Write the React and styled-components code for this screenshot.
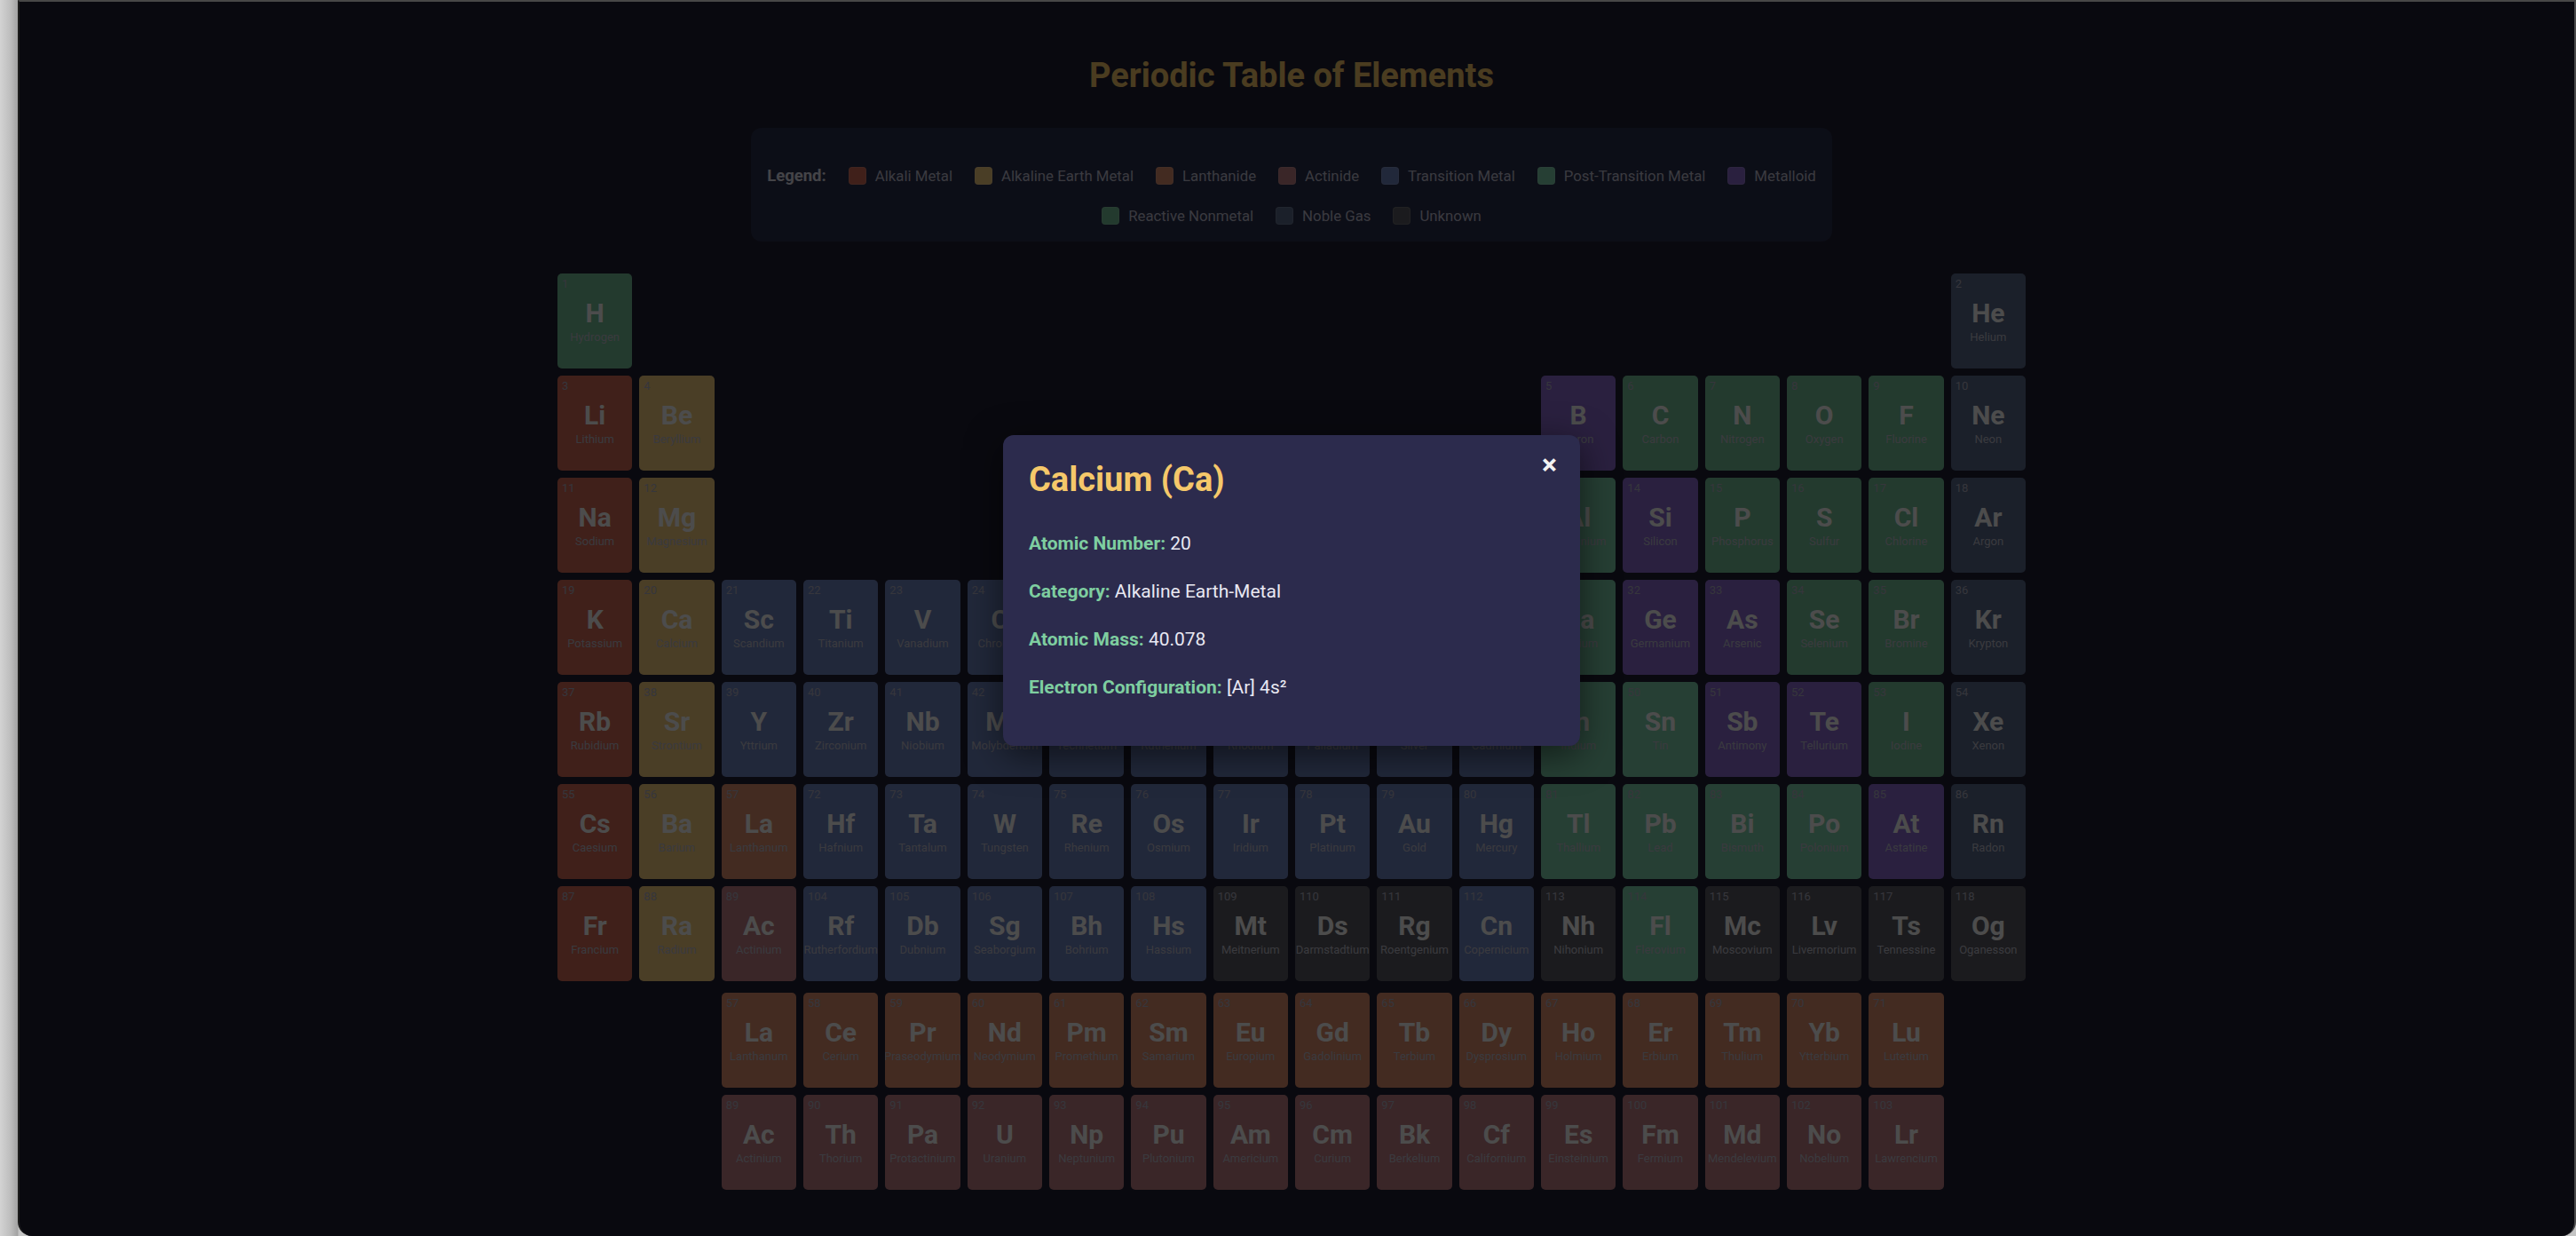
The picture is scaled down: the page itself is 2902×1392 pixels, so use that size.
import React from "react";
import styled, { createGlobalStyle } from "styled-components";

const CATEGORY = {
  alkali: { label: "Alkali Metal", color: "#d56b57" },
  alkaline: { label: "Alkaline Earth Metal", color: "#f7cf7f" },
  lanthanide: { label: "Lanthanide", color: "#df8f6e" },
  actinide: { label: "Actinide", color: "#c17f85" },
  transition: { label: "Transition Metal", color: "#7185c1" },
  post: { label: "Post-Transition Metal", color: "#7fd2ad" },
  metalloid: { label: "Metalloid", color: "#8c6bd2" },
  reactive: { label: "Reactive Nonmetal", color: "#75c199" },
  noble: { label: "Noble Gas", color: "#5a6b8c" },
  unknown: { label: "Unknown", color: "#5d5d64" },
};

const LEGEND_ROWS = [
  ["alkali", "alkaline", "lanthanide", "actinide", "transition", "post", "metalloid"],
  ["reactive", "noble", "unknown"],
];

// [number, symbol, name, category, column]
const PERIODS = [
  [
    [1, "H", "Hydrogen", "reactive", 1],
    [2, "He", "Helium", "noble", 18],
  ],
  [
    [3, "Li", "Lithium", "alkali", 1],
    [4, "Be", "Beryllium", "alkaline", 2],
    [5, "B", "Boron", "metalloid", 13],
    [6, "C", "Carbon", "reactive", 14],
    [7, "N", "Nitrogen", "reactive", 15],
    [8, "O", "Oxygen", "reactive", 16],
    [9, "F", "Fluorine", "reactive", 17],
    [10, "Ne", "Neon", "noble", 18],
  ],
  [
    [11, "Na", "Sodium", "alkali", 1],
    [12, "Mg", "Magnesium", "alkaline", 2],
    [13, "Al", "Aluminium", "post", 13],
    [14, "Si", "Silicon", "metalloid", 14],
    [15, "P", "Phosphorus", "reactive", 15],
    [16, "S", "Sulfur", "reactive", 16],
    [17, "Cl", "Chlorine", "reactive", 17],
    [18, "Ar", "Argon", "noble", 18],
  ],
  [
    [19, "K", "Potassium", "alkali", 1],
    [20, "Ca", "Calcium", "alkaline", 2],
    [21, "Sc", "Scandium", "transition", 3],
    [22, "Ti", "Titanium", "transition", 4],
    [23, "V", "Vanadium", "transition", 5],
    [24, "Cr", "Chromium", "transition", 6],
    [25, "Mn", "Manganese", "transition", 7],
    [26, "Fe", "Iron", "transition", 8],
    [27, "Co", "Cobalt", "transition", 9],
    [28, "Ni", "Nickel", "transition", 10],
    [29, "Cu", "Copper", "transition", 11],
    [30, "Zn", "Zinc", "transition", 12],
    [31, "Ga", "Gallium", "post", 13],
    [32, "Ge", "Germanium", "metalloid", 14],
    [33, "As", "Arsenic", "metalloid", 15],
    [34, "Se", "Selenium", "reactive", 16],
    [35, "Br", "Bromine", "reactive", 17],
    [36, "Kr", "Krypton", "noble", 18],
  ],
  [
    [37, "Rb", "Rubidium", "alkali", 1],
    [38, "Sr", "Strontium", "alkaline", 2],
    [39, "Y", "Yttrium", "transition", 3],
    [40, "Zr", "Zirconium", "transition", 4],
    [41, "Nb", "Niobium", "transition", 5],
    [42, "Mo", "Molybdenum", "transition", 6],
    [43, "Tc", "Technetium", "transition", 7],
    [44, "Ru", "Ruthenium", "transition", 8],
    [45, "Rh", "Rhodium", "transition", 9],
    [46, "Pd", "Palladium", "transition", 10],
    [47, "Ag", "Silver", "transition", 11],
    [48, "Cd", "Cadmium", "transition", 12],
    [49, "In", "Indium", "post", 13],
    [50, "Sn", "Tin", "post", 14],
    [51, "Sb", "Antimony", "metalloid", 15],
    [52, "Te", "Tellurium", "metalloid", 16],
    [53, "I", "Iodine", "reactive", 17],
    [54, "Xe", "Xenon", "noble", 18],
  ],
  [
    [55, "Cs", "Caesium", "alkali", 1],
    [56, "Ba", "Barium", "alkaline", 2],
    [57, "La", "Lanthanum", "lanthanide", 3],
    [72, "Hf", "Hafnium", "transition", 4],
    [73, "Ta", "Tantalum", "transition", 5],
    [74, "W", "Tungsten", "transition", 6],
    [75, "Re", "Rhenium", "transition", 7],
    [76, "Os", "Osmium", "transition", 8],
    [77, "Ir", "Iridium", "transition", 9],
    [78, "Pt", "Platinum", "transition", 10],
    [79, "Au", "Gold", "transition", 11],
    [80, "Hg", "Mercury", "transition", 12],
    [81, "Tl", "Thallium", "post", 13],
    [82, "Pb", "Lead", "post", 14],
    [83, "Bi", "Bismuth", "post", 15],
    [84, "Po", "Polonium", "post", 16],
    [85, "At", "Astatine", "metalloid", 17],
    [86, "Rn", "Radon", "noble", 18],
  ],
  [
    [87, "Fr", "Francium", "alkali", 1],
    [88, "Ra", "Radium", "alkaline", 2],
    [89, "Ac", "Actinium", "actinide", 3],
    [104, "Rf", "Rutherfordium", "transition", 4],
    [105, "Db", "Dubnium", "transition", 5],
    [106, "Sg", "Seaborgium", "transition", 6],
    [107, "Bh", "Bohrium", "transition", 7],
    [108, "Hs", "Hassium", "transition", 8],
    [109, "Mt", "Meitnerium", "unknown", 9],
    [110, "Ds", "Darmstadtium", "unknown", 10],
    [111, "Rg", "Roentgenium", "unknown", 11],
    [112, "Cn", "Copernicium", "transition", 12],
    [113, "Nh", "Nihonium", "unknown", 13],
    [114, "Fl", "Flerovium", "post", 14],
    [115, "Mc", "Moscovium", "unknown", 15],
    [116, "Lv", "Livermorium", "unknown", 16],
    [117, "Ts", "Tennessine", "unknown", 17],
    [118, "Og", "Oganesson", "unknown", 18],
  ],
];

const LANTHANIDES = [
  ["La", "Lanthanum"], ["Ce", "Cerium"], ["Pr", "Praseodymium"], ["Nd", "Neodymium"],
  ["Pm", "Promethium"], ["Sm", "Samarium"], ["Eu", "Europium"], ["Gd", "Gadolinium"],
  ["Tb", "Terbium"], ["Dy", "Dysprosium"], ["Ho", "Holmium"], ["Er", "Erbium"],
  ["Tm", "Thulium"], ["Yb", "Ytterbium"], ["Lu", "Lutetium"],
];

const ACTINIDES = [
  ["Ac", "Actinium"], ["Th", "Thorium"], ["Pa", "Protactinium"], ["U", "Uranium"],
  ["Np", "Neptunium"], ["Pu", "Plutonium"], ["Am", "Americium"], ["Cm", "Curium"],
  ["Bk", "Berkelium"], ["Cf", "Californium"], ["Es", "Einsteinium"], ["Fm", "Fermium"],
  ["Md", "Mendelevium"], ["No", "Nobelium"], ["Lr", "Lawrencium"],
];

const SELECTED = {
  name: "Calcium",
  symbol: "Ca",
  number: 20,
  category: "Alkaline Earth-Metal",
  mass: "40.078",
  config: "[Ar] 4s²",
};

function ElementCell({ number, symbol, name, category, col, row }) {
  return (
    <Cell $color={CATEGORY[category].color} $col={col} $row={row}>
      <CellNumber>{number}</CellNumber>
      <CellSymbol>{symbol}</CellSymbol>
      <CellName>{name}</CellName>
    </Cell>
  );
}

export default function App() {
  return (
    <>
      <GlobalStyle />
      <Window>
        <Page>
          <Title>Periodic Table of Elements</Title>
          <Legend>
            {LEGEND_ROWS.map((keys, i) => (
              <LegendRow key={i}>
                {i === 0 ? <LegendLabel>Legend:</LegendLabel> : null}
                {keys.map((key) => (
                  <LegendItem key={key}>
                    <Swatch $color={CATEGORY[key].color} />
                    {CATEGORY[key].label}
                  </LegendItem>
                ))}
              </LegendRow>
            ))}
          </Legend>
          <TableGrid>
            {PERIODS.map((period, p) =>
              period.map(([number, symbol, name, category, col]) => (
                <ElementCell
                  key={number}
                  number={number}
                  symbol={symbol}
                  name={name}
                  category={category}
                  col={col}
                  row={p + 1}
                />
              ))
            )}
          </TableGrid>
          <FBlockGrid>
            {LANTHANIDES.map(([symbol, name], i) => (
              <ElementCell
                key={symbol}
                number={57 + i}
                symbol={symbol}
                name={name}
                category="lanthanide"
                col={3 + i}
                row={1}
              />
            ))}
            {ACTINIDES.map(([symbol, name], i) => (
              <ElementCell
                key={symbol}
                number={89 + i}
                symbol={symbol}
                name={name}
                category="actinide"
                col={3 + i}
                row={2}
              />
            ))}
          </FBlockGrid>
        </Page>
        <Overlay>
          <Modal>
            <CloseButton>×</CloseButton>
            <ModalTitle>
              {SELECTED.name} ({SELECTED.symbol})
            </ModalTitle>
            <ModalBody>
              <InfoRow>
                <InfoLabel>Atomic Number:</InfoLabel> {SELECTED.number}
              </InfoRow>
              <InfoRow>
                <InfoLabel>Category:</InfoLabel> {SELECTED.category}
              </InfoRow>
              <InfoRow>
                <InfoLabel>Atomic Mass:</InfoLabel> {SELECTED.mass}
              </InfoRow>
              <InfoRow>
                <InfoLabel>Electron Configuration:</InfoLabel> {SELECTED.config}
              </InfoRow>
            </ModalBody>
          </Modal>
        </Overlay>
      </Window>
    </>
  );
}

const GlobalStyle = createGlobalStyle`
  html, body {
    margin: 0;
    padding: 0;
  }
  body {
    background: linear-gradient(90deg, #d3d3d3 0, #bdbdbd 12px, #a2a2a2 20px, #c4c4c4 21px);
    font-family: "Roboto", "Liberation Sans", sans-serif;
    overflow: hidden;
  }
`;

const Window = styled.div`
  position: relative;
  box-sizing: border-box;
  margin-left: 20px;
  height: 1392px;
  background: #212135;
  border-top: 2px solid #474747;
  border-left: 2px solid #1c1c1c;
  border-right: 2px solid #4a4a4a;
  border-radius: 0 0 16px 16px;
  overflow: hidden;
`;

const Page = styled.div`
  padding: 61px 12px 0 0;
`;

const Title = styled.h1`
  margin: 0 0 35px;
  text-align: center;
  font-size: 38px;
  line-height: 1.2;
  font-weight: 700;
  color: #f7c86b;
`;

const Legend = styled.div`
  box-sizing: border-box;
  width: 1218px;
  margin: 0 auto 36px;
  padding: 44px 18px 19px;
  display: flex;
  flex-direction: column;
  gap: 25px;
  background: #2b2f4d;
  border-radius: 12px;
`;

const LegendRow = styled.div`
  display: flex;
  justify-content: center;
  align-items: center;
  gap: 25px;
  height: 20px;
  white-space: nowrap;
`;

const LegendLabel = styled.span`
  font-size: 18.5px;
  font-weight: 700;
  color: #e3e3f0;
`;

const LegendItem = styled.span`
  display: flex;
  align-items: center;
  gap: 10px;
  font-size: 16.8px;
  color: #c1c1d5;
`;

const Swatch = styled.span`
  width: 20px;
  height: 20px;
  box-sizing: border-box;
  border-radius: 4px;
  border: 1px solid rgba(255, 255, 255, 0.12);
  background: ${(props) => props.$color};
`;

const TableGrid = styled.div`
  display: grid;
  width: 1654px;
  margin: 0 auto;
  grid-template-columns: repeat(18, 1fr);
  grid-auto-rows: 107px;
  gap: 8px;
`;

const FBlockGrid = styled(TableGrid)`
  margin-top: 13px;
`;

const Cell = styled.div`
  grid-column: ${(props) => props.$col};
  grid-row: ${(props) => props.$row};
  display: flex;
  flex-direction: column;
  align-items: center;
  box-sizing: border-box;
  padding: 4px 5px;
  border-radius: 5px;
  background: ${(props) => props.$color};
  overflow: hidden;
  cursor: pointer;
`;

const CellNumber = styled.span`
  align-self: flex-start;
  font-size: 13px;
  line-height: 16px;
  color: #b5b5c8;
`;

const CellSymbol = styled.span`
  margin: 9px 0 4px;
  font-size: 30px;
  line-height: 31px;
  font-weight: 700;
  color: #ffffff;
`;

const CellName = styled.span`
  font-size: 13px;
  line-height: 15px;
  white-space: nowrap;
  color: #c3c3d2;
`;

const Overlay = styled.div`
  position: absolute;
  inset: 0;
  display: flex;
  justify-content: center;
  align-items: center;
  padding: 0 12px 64px 0;
  box-sizing: border-box;
  background: rgba(0, 0, 0, 0.7);
`;

const Modal = styled.div`
  position: relative;
  box-sizing: border-box;
  width: 650px;
  padding: 28px 29px 50px;
  display: flex;
  flex-direction: column;
  background: #2c2b4d;
  border-radius: 12px;
  box-shadow: 0 10px 40px rgba(0, 0, 0, 0.55);
`;

const CloseButton = styled.button`
  position: absolute;
  top: 17px;
  right: 26px;
  padding: 0;
  border: none;
  background: none;
  font-family: "Roboto", "Liberation Sans", sans-serif;
  font-size: 32px;
  line-height: 1;
  font-weight: 700;
  color: #f2f2f2;
  cursor: pointer;
`;

const ModalTitle = styled.h2`
  margin: 0;
  font-size: 38px;
  line-height: 1.2;
  font-weight: 700;
  color: #f5c86a;
`;

const ModalBody = styled.div`
  margin-top: 33px;
  display: flex;
  flex-direction: column;
  gap: 22px;
`;

const InfoRow = styled.p`
  margin: 0;
  font-size: 21px;
  line-height: 32px;
  color: #e8e8f2;
`;

const InfoLabel = styled.strong`
  font-weight: 700;
  color: #7ecea0;
`;
